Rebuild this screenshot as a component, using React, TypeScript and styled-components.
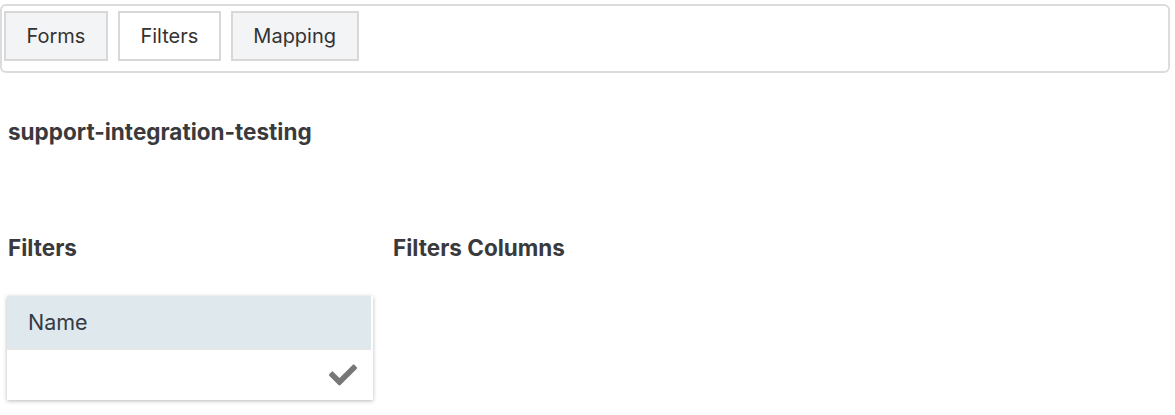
import React from "react";
import styled, { createGlobalStyle } from "styled-components";
import { FaCheck } from "react-icons/fa";

const GlobalStyle = createGlobalStyle`
  body {
    margin: 0;
    background: #ffffff;
    font-family: Inter, "Noto Sans", Arial, sans-serif;
    color: #333;
  }
`;

const tabs = [
  { label: "Forms", active: false },
  { label: "Filters", active: true },
  { label: "Mapping", active: false },
];

const App: React.FC = () => {
  return (
    <>
      <GlobalStyle />
      <Page>
        <TabBar>
          {tabs.map((t) => (
            <TabButton key={t.label} $active={t.active}>
              {t.label}
            </TabButton>
          ))}
        </TabBar>
        <Content>
          <Title>support-integration-testing</Title>
          <Columns>
            <LeftColumn>
              <Heading>Filters</Heading>
              <FilterList>
                <ListHeader>Name</ListHeader>
                <ListRow>
                  <FaCheck />
                </ListRow>
              </FilterList>
            </LeftColumn>
            <RightColumn>
              <Heading>Filters Columns</Heading>
            </RightColumn>
          </Columns>
        </Content>
      </Page>
    </>
  );
};

const Page = styled.div`
  width: 1175px;
  height: 415px;
  overflow: hidden;
`;

const TabBar = styled.div`
  margin-top: 4px;
  width: 1170px;
  box-sizing: border-box;
  display: flex;
  gap: 10px;
  padding: 5px 0 10px 2px;
  border: 2px solid #dcdcdc;
  border-radius: 6px;
`;

const TabButton = styled.button<{ $active: boolean }>`
  height: 50px;
  padding: 0 20.5px;
  font-family: Inter, "Noto Sans", Arial, sans-serif;
  font-size: 20px;
  color: #333;
  background: ${(p) => (p.$active ? "#ffffff" : "#f3f4f5")};
  border: 2px solid #d8d8d8;
  border-radius: 0;
  cursor: pointer;
`;

const Content = styled.div`
  padding-left: 8px;
`;

const Title = styled.h2`
  margin: 45px 0 0;
  font-size: 22.5px;
  font-weight: 700;
  line-height: 28px;
  color: #3a3a3c;
`;

const Columns = styled.div`
  display: flex;
  margin-top: 88px;
`;

const LeftColumn = styled.div`
  width: 385px;
`;

const RightColumn = styled.div`
  flex: 1;
`;

const Heading = styled.h3`
  margin: 0;
  font-size: 22.5px;
  font-weight: 700;
  line-height: 28px;
  color: #3a3a3c;
`;

const FilterList = styled.div`
  margin: 34px 0 0 -1px;
  width: 366px;
  background: #ffffff;
  box-shadow: 0 1px 4px rgba(0, 0, 0, 0.28);
`;

const ListHeader = styled.div`
  height: 52px;
  display: flex;
  align-items: center;
  padding-left: 21px;
  margin-right: 2px;
  background: #dfe8ed;
  border-bottom: 2px solid #e6e6e6;
  font-size: 21.5px;
  color: #333b47;
`;

const ListRow = styled.div`
  height: 50px;
  display: flex;
  align-items: center;
  justify-content: flex-end;
  padding-right: 16px;
  color: #777;

  svg {
    width: 28px;
    height: 28px;
  }
`;

export default App;
